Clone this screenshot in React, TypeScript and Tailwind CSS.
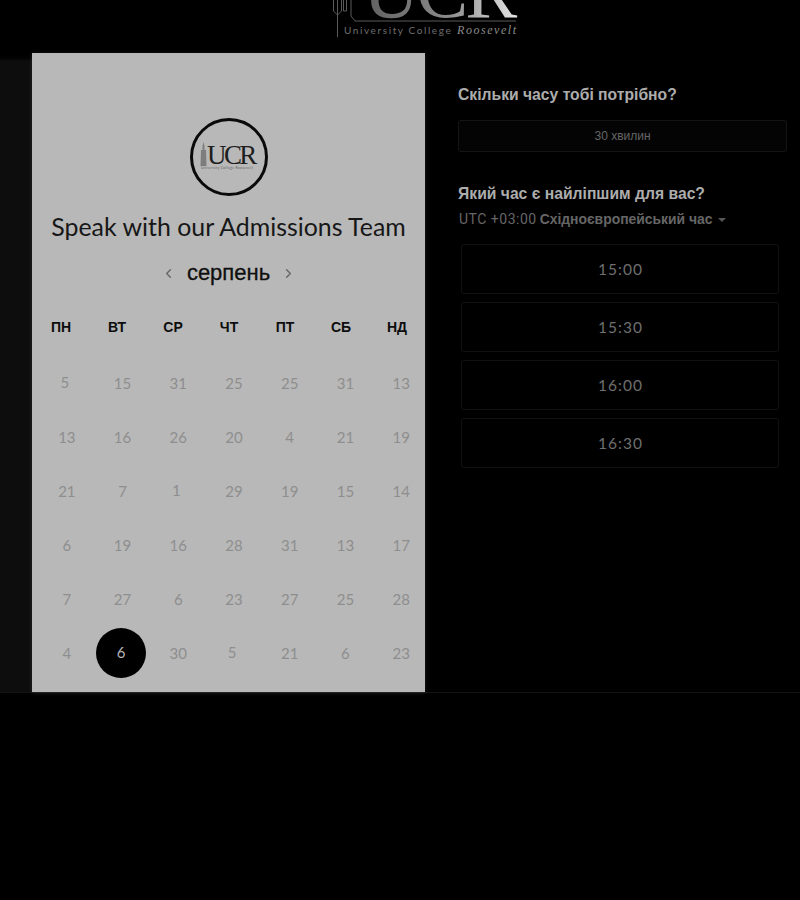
import { ChevronLeft, ChevronRight } from 'lucide-react';

type Day = { n: number; raised?: boolean; selected?: boolean };

const weekdays = ['ПН', 'ВТ', 'СР', 'ЧТ', 'ПТ', 'СБ', 'НД'];

const weeks: Day[][] = [
  [{ n: 5, raised: true }, { n: 15 }, { n: 31 }, { n: 25 }, { n: 25 }, { n: 31 }, { n: 13 }],
  [{ n: 13 }, { n: 16 }, { n: 26 }, { n: 20 }, { n: 4 }, { n: 21 }, { n: 19 }],
  [{ n: 21 }, { n: 7 }, { n: 1, raised: true }, { n: 29 }, { n: 19 }, { n: 15 }, { n: 14 }],
  [{ n: 6 }, { n: 19 }, { n: 16 }, { n: 28 }, { n: 31 }, { n: 13 }, { n: 17 }],
  [{ n: 7 }, { n: 27 }, { n: 6 }, { n: 23 }, { n: 27 }, { n: 25 }, { n: 28 }],
  [{ n: 4 }, { n: 6, selected: true }, { n: 30 }, { n: 5, raised: true }, { n: 21 }, { n: 6 }, { n: 23 }],
];

const slots = ['15:00', '15:30', '16:00', '16:30'];

function HeaderLogo() {
  return (
    <svg width="200" height="53" viewBox="0 0 200 53" className="block">
      <defs>
        <linearGradient id="ucrFill" x1="0" x2="1" y1="0" y2="0">
          <stop offset="0" stopColor="#5f5f5f" />
          <stop offset="0.55" stopColor="#8a8a8a" />
          <stop offset="1" stopColor="#e6e6e6" />
        </linearGradient>
      </defs>
      <text x="34" y="17" fontFamily="'Liberation Serif', serif" fontSize="78" letterSpacing="-3" fill="url(#ucrFill)">
        UCR
      </text>
      <g fill="none" stroke="#5a5a5a" strokeWidth="1">
        <path d="M8.5 0V37" />
        <path d="M4.5 0V11L8.5 15L12.5 11V0" />
        <path d="M14.5 0V11H17.5V0" />
        <path d="M22 0V16L26 21H187" />
      </g>
      <text x="15" y="34" fontFamily="Lato, sans-serif" fontSize="10" letterSpacing="1.6" fill="#6f6f6f">
        University College
      </text>
      <text x="128" y="34" fontFamily="'Liberation Serif', serif" fontSize="12" fontStyle="italic" letterSpacing="1.55" fill="#8c8c8c">
        Roosevelt
      </text>
    </svg>
  );
}

function CircleLogo() {
  return (
    <div className="flex h-[78px] w-[78px] items-center justify-center rounded-full border-[3px] border-[#0a0a0a]">
      <svg width="62" height="36" viewBox="0 0 62 36" className="block">
        <path d="M3 11h1.5V7L5.5 3L6.5 7v4H8l.5 16H2.5z" fill="#7d7d7d" />
        <text x="9" y="24.5" fontFamily="'Liberation Serif', serif" fontSize="27" letterSpacing="-2.6" fill="#1d1d1d">
          UCR
        </text>
        <text x="3" y="29.5" fontFamily="Lato, sans-serif" fontSize="3.4" letterSpacing="0.35" fill="#5f5f5f">
          University College Roosevelt
        </text>
      </svg>
    </div>
  );
}

export default function App() {
  return (
    <div className="h-[900px] w-[800px] overflow-hidden bg-black">
      <div className="opacity-[0.999] font-['Liberation_Sans',sans-serif]">
        <header className="flex h-[53px] justify-center overflow-hidden pl-[58px]">
          <HeaderLogo />
        </header>

        <main className="flex h-[640px] border-b border-[#141414]">
          <div className="w-[32px] bg-gradient-to-b from-black to-[#0d0d0d] to-[8px]" />

          <section className="h-[639px] w-[393px] overflow-hidden bg-[#b8b8b8] shadow-[0_1px_4px_rgba(255,255,255,0.12)]">
            <div className="flex justify-center pt-[65px]">
              <CircleLogo />
            </div>

            <h1 className="mt-[13px] text-center font-['Lato',sans-serif] text-[24.9px] leading-[34px] font-normal whitespace-nowrap text-[#171717]">
              Speak with our Admissions Team
            </h1>

            <div className="mt-[16px] flex h-[28px] items-center justify-center gap-[10px]">
              <ChevronLeft size={15} strokeWidth={2.2} className="text-[#666666]" />
              <span className="w-[85px] text-center text-[22px] leading-[28px] text-[#0f0f0f] [-webkit-text-stroke:0.3px_#0f0f0f]">
                серпень
              </span>
              <ChevronRight size={15} strokeWidth={2.2} className="text-[#666666]" />
            </div>

            <div className="mt-[31px] ml-[1px] grid w-[392px] grid-cols-7">
              {weekdays.map((day) => (
                <div key={day} className="text-center text-[14px] leading-[18px] font-bold text-[#0d0d0d]">
                  {day}
                </div>
              ))}
            </div>

            <div className="mt-[20px] ml-[7px] w-[390px]">
              {weeks.map((week, i) => (
                <div key={i} className="grid h-[54px] grid-cols-7">
                  {week.map((day, j) => (
                    <div key={j} className="flex items-center justify-center">
                      {day.selected ? (
                        <span className="mr-[3px] flex h-[50px] w-[50px] items-center justify-center rounded-full bg-black pb-[2px] font-['Lato',sans-serif] text-[15px] text-[#b5b5b5]">
                          {day.n}
                        </span>
                      ) : (
                        <span
                          className={
                            day.raised
                              ? "mr-[4px] mb-[2px] font-['Lato',sans-serif] text-[15px] leading-[20px] text-[#8e8e8e]"
                              : "font-['Lato',sans-serif] text-[15px] leading-[20px] text-[#8e8e8e]"
                          }
                        >
                          {day.n}
                        </span>
                      )}
                    </div>
                  ))}
                </div>
              ))}
            </div>
          </section>

          <section className="w-[375px] pt-[32px] pl-[33px]">
            <h2 className="text-[15.7px] leading-[20px] font-bold whitespace-nowrap text-[#adadad]">
              Скільки часу тобі потрібно?
            </h2>
            <div className="mt-[15px] flex h-[32px] w-[329px] items-center justify-center rounded-[3px] border border-[#151515] bg-[#040404] text-[12px] text-[#666666]">
              30 хвилин
            </div>

            <h2 className="mt-[32px] text-[15.7px] leading-[20px] font-bold whitespace-nowrap text-[#adadad]">
              Який час є найліпшим для вас?
            </h2>
            <div className="mt-[5px] ml-[1px] flex h-[20px] items-center text-[14px] whitespace-nowrap text-[#666666]">
              <span className="font-['Roboto',sans-serif] tracking-[0.5px]">UTC +03:00</span>
              <span className="ml-[3px] text-[13.9px] font-bold">Східноєвропейський час</span>
              <span className="mt-[2px] ml-[6px] h-0 w-0 border-x-[4px] border-t-[4px] border-x-transparent border-t-[#555555]" />
            </div>

            <div className="mt-[15px] ml-[3px] flex w-[318px] flex-col gap-[8px]">
              {slots.map((slot) => (
                <div
                  key={slot}
                  className="flex h-[50px] items-center justify-center rounded-[3px] border border-[#111111] bg-black pt-[2px] pl-[1px] font-['Lato',sans-serif] text-[15.5px] tracking-[1px] text-[#6f6f6f]"
                >
                  {slot}
                </div>
              ))}
            </div>
          </section>
        </main>
      </div>
    </div>
  );
}
